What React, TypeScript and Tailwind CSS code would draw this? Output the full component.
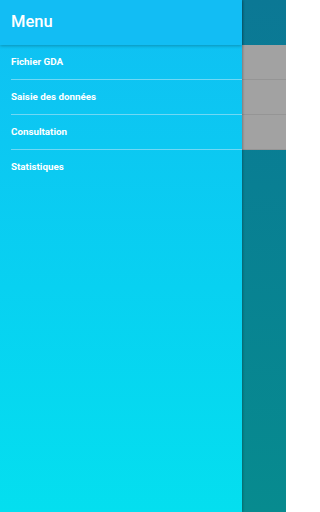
const items = ['Fichier GDA', 'Saisie des données', 'Consultation', 'Statistiques'];

export default function App() {
  return (
    <div className="flex h-[512px] w-[286px] overflow-hidden font-['Roboto',sans-serif]">
      {/* Drawer */}
      <div className="relative z-10 flex w-[242px] shrink-0 flex-col bg-gradient-to-b from-[#10bff3] to-[#04dfef] shadow-[1px_0_2px_rgba(0,0,0,0.25)]">
        <div className="flex h-[45px] items-center bg-[#12bdf4] px-[11px] shadow-[0_1px_3px_rgba(0,0,0,0.25)]">
          <span className="text-[16.5px] font-medium text-white">Menu</span>
        </div>
        <ul className="flex flex-col">
          {items.map((item, i) => (
            <li key={item} className="flex flex-col pl-[11px]">
              <div className="flex h-[34px] items-center text-[9.8px] font-bold text-white">{item}</div>
              {i < items.length - 1 && <div className="h-px bg-[#70d8f5]" />}
            </li>
          ))}
        </ul>
      </div>

      {/* Dimmed content behind drawer */}
      <div className="flex flex-1 flex-col bg-gradient-to-b from-[#0b7895] to-[#078b8f]">
        <div className="h-[45px]" />
        {[0, 1, 2].map((i) => (
          <div key={i} className="flex h-[35px] flex-col bg-[#a2a2a2]">
            <div className="flex-1" />
            <div className="h-px bg-[#959595]" />
          </div>
        ))}
      </div>
    </div>
  );
}
